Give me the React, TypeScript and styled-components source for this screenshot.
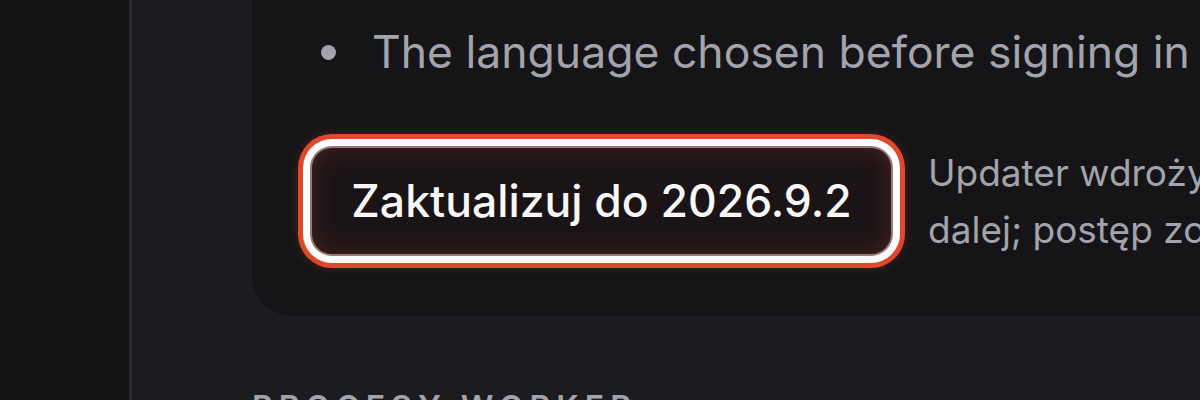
import styled, { createGlobalStyle } from 'styled-components';

const GlobalStyle = createGlobalStyle`
  html, body {
    margin: 0;
    padding: 0;
    background: #1c1c20;
    overflow: hidden;
  }

  body {
    font-family: Inter, "Noto Sans", sans-serif;
    -webkit-font-smoothing: antialiased;
  }
`;

const Shell = styled.div`
  display: flex;
  height: 400px;
  width: 1200px;
  overflow: hidden;
`;

const Sidebar = styled.aside`
  flex: 0 0 129px;
  background: #141416;
  border-right: 3px solid #2a2a2f;
`;

const Main = styled.main`
  flex: 1;
  min-width: 0;
  padding-left: 120px;
  background: #1c1c20;
`;

const Card = styled.section`
  width: 1100px;
  margin-top: -60px;
  padding: 60px 0 58px 58px;
  background: #151517;
  border-radius: 40px;
`;

const Notes = styled.ul`
  margin: 0;
  padding: 19px 0 0 0;
  list-style: none;
`;

const Note = styled.li`
  display: flex;
  align-items: center;
  gap: 36px;
  padding-left: 11px;
  font-size: 44.5px;
  line-height: 66px;
  color: #a3a3ab;
  white-space: nowrap;

  &::before {
    content: '';
    flex: 0 0 15px;
    height: 15px;
    border-radius: 50%;
    background: #a3a3ab;
  }
`;

const ActionRow = styled.div`
  display: flex;
  align-items: center;
  gap: 35px;
  margin-top: 59px;
`;

const UpdateButton = styled.button`
  flex: 0 0 auto;
  width: 583px;
  height: 110px;
  padding: 0;
  border: 2px solid rgba(232, 190, 186, 0.6);
  border-radius: 22px;
  background: #1a1416;
  color: #f7f7f8;
  font-family: Inter, "Noto Sans", sans-serif;
  font-size: 44.5px;
  font-weight: 500;
  cursor: pointer;
  box-shadow:
    inset 0 0 26px rgba(190, 70, 60, 0.28),
    0 0 0 7px #ffffff,
    0 0 0 12px #e0472b,
    0 0 10px 12px rgba(224, 71, 43, 0.25);
`;

const Description = styled.p`
  margin: 0;
  font-size: 37px;
  line-height: 57px;
  color: #a3a3ab;
  white-space: nowrap;
`;

const SectionTitle = styled.h2`
  margin: 76px 0 0 0;
  font-size: 32px;
  line-height: 32px;
  font-weight: 600;
  letter-spacing: 6px;
  text-transform: uppercase;
  color: #a3a3ab;
  white-space: nowrap;
`;

export default function App() {
  return (
    <>
      <GlobalStyle />
      <Shell>
        <Sidebar />
        <Main>
          <Card>
            <Notes>
              <Note>The language chosen before signing in is kept</Note>
            </Notes>
            <ActionRow>
              <UpdateButton type="button">Zaktualizuj do 2026.9.2</UpdateButton>
              <Description>
                Updater wdroży nową wersję i
                <br />
                dalej; postęp zobaczysz tutaj
              </Description>
            </ActionRow>
          </Card>
          <SectionTitle>Procesy worker</SectionTitle>
        </Main>
      </Shell>
    </>
  );
}
